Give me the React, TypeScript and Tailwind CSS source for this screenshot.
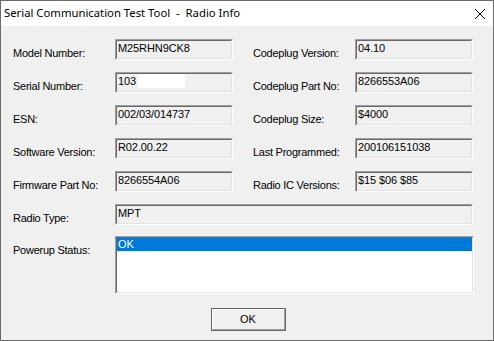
import React from "react";

const font = { fontFamily: '"Liberation Sans", Arial, sans-serif' };

function Field({ value, className = "", children }: { value?: string; className?: string; children?: React.ReactNode }) {
  return (
    <div className={`border-t border-l border-t-[#a0a0a0] border-l-[#a0a0a0] border-b border-r border-b-white border-r-white ${className}`}>
      <div className="h-full border-t border-l border-t-[#696969] border-l-[#696969] border-b border-r border-b-[#e3e3e3] border-r-[#e3e3e3] bg-[#f0f0f0] pl-[1px] pt-0 text-[11px] leading-[14px] text-black tracking-[-0.1px]">
        {value}
        {children}
      </div>
    </div>
  );
}

const labelCls = "w-[102px] pt-[8px] text-[11px] leading-[13px] tracking-[-0.25px]";

function Row({ left, lv, right, rv, lch }: { left: string; lv?: string; right?: string; rv?: string; lch?: React.ReactNode }) {
  return (
    <div className="flex h-[21px]">
      <div className={labelCls}>{left}</div>
      <Field value={lv} className="w-[118px] h-[21px]">{lch}</Field>
      {right && (
        <>
          <div className={`ml-[20px] ${labelCls}`}>{right}</div>
          <Field value={rv} className="w-[118px] h-[21px]" />
        </>
      )}
    </div>
  );
}

export default function App() {
  return (
    <div className="w-[494px] h-[341px] bg-[#f0f0f0] border border-[#6b6b6b] flex flex-col" style={font}>
      <div className="h-[25px] bg-white flex items-center justify-between pl-[3px] pr-[7px] shrink-0">
        <span className="text-[11.3px] text-black" style={{ fontFamily: '"Noto Sans", "Open Sans", sans-serif' }}>
          Serial Communication Test Tool&nbsp; - &nbsp;Radio Info
        </span>
        <svg width="12" height="12" viewBox="0 0 12 12">
          <path d="M1 1 L11 11 M11 1 L1 11" stroke="#000" strokeWidth="1" fill="none" />
        </svg>
      </div>
      <div className="flex flex-col pl-[12px] pt-[13px] text-black">
        <div className="flex flex-col gap-[12px]">
          <Row left="Model Number:" lv="M25RHN9CK8" right="Codeplug Version:" rv="04.10" />
          <Row left="Serial Number:" lv="103" lch={<span className="inline-block w-[47px] h-[14px] bg-white align-top ml-[2px]" />} right="Codeplug Part No:" rv="8266553A06" />
          <Row left="ESN:" lv="002/03/014737" right="Codeplug Size:" rv="$4000" />
          <Row left="Software Version:" lv="R02.00.22" right="Last Programmed:" rv="200106151038" />
          <Row left="Firmware Part No:" lv="8266554A06" right="Radio IC Versions:" rv="$15 $06 $85" />
          <div className="flex h-[21px]">
            <div className={labelCls}>Radio Type:</div>
            <Field value="MPT" className="w-[358px] h-[21px]" />
          </div>
        </div>
        <div className="flex mt-[11px]">
          <div className={labelCls}>Powerup Status:</div>
          <div className="w-[359px] h-[58px] border-t border-l border-t-[#a0a0a0] border-l-[#a0a0a0] border-b border-r border-b-white border-r-white">
            <div className="h-full border-t border-l border-t-[#696969] border-l-[#696969] border-b border-r border-b-[#e3e3e3] border-r-[#e3e3e3] bg-white">
              <div className="h-[13px] bg-[#0078d7] text-white text-[11px] leading-[13px] pl-[1px]">OK</div>
            </div>
          </div>
        </div>
        <div className="flex justify-center mt-[14px] pr-[10px]">
          <div className="w-[75px] h-[23px] border border-[#646464]">
            <div className="h-full border-t border-l border-t-white border-l-white border-b border-r border-b-[#a0a0a0] border-r-[#a0a0a0] bg-[#f0f0f0] flex items-center justify-center text-[11px]">
              OK
            </div>
          </div>
        </div>
      </div>
    </div>
  );
}
